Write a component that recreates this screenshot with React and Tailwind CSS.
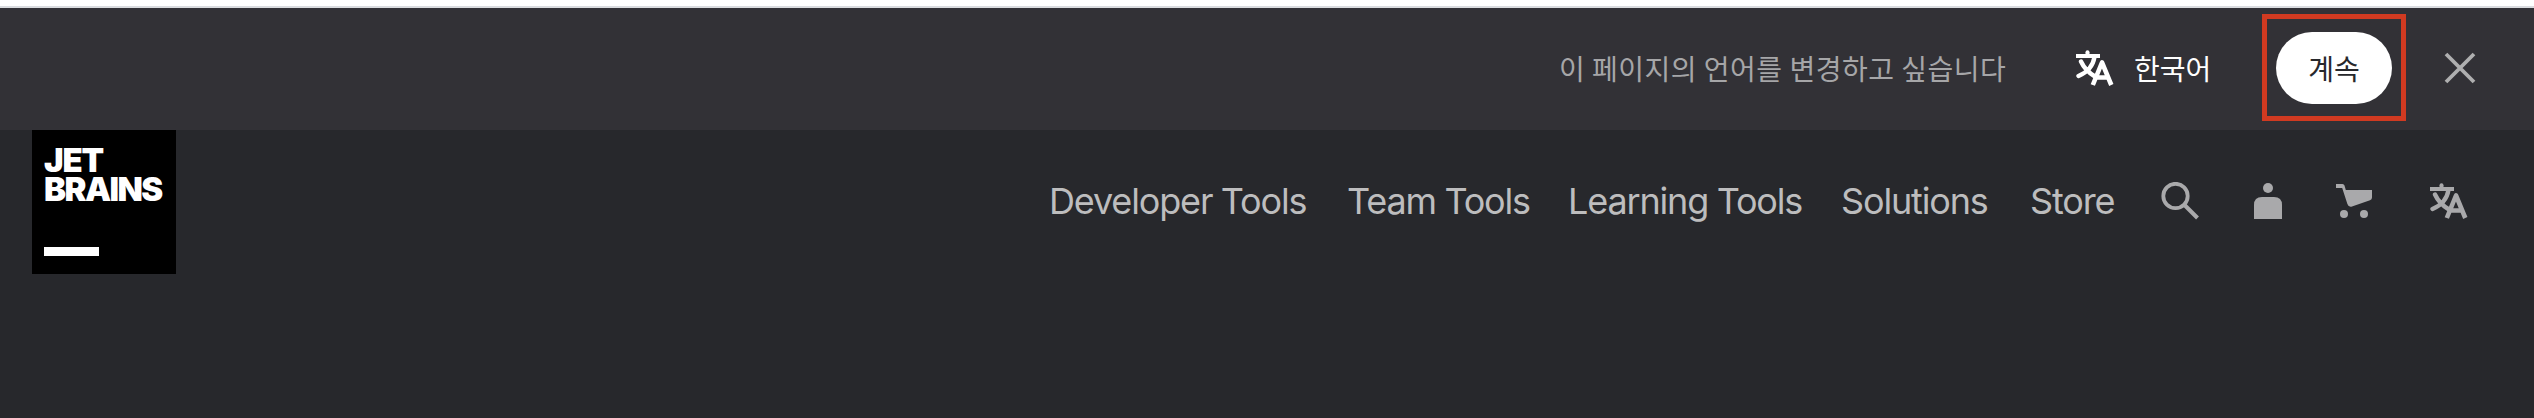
const Translate = ({ className }) => (
  <svg className={className} viewBox="0 0 38 36" fill="none" stroke="currentColor">
    <path d="M0 6H24" strokeWidth="4" />
    <path d="M11.5 4V2.3" strokeWidth="4" strokeLinecap="round" />
    <path d="M5 11.500C8 18 13 23 19 26.500M18.500 7C17 16 11 22.500 2.500 26" strokeWidth="4.400" strokeLinecap="round" />
    <path d="M16.800 35L26 12.500L35.300 35M20 27.500H32" strokeWidth="4.600" strokeLinejoin="round" />
  </svg>
);

const Search = () => (
  <svg className="h-[38px] w-[38px]" viewBox="0 0 38 38" fill="none" stroke="currentColor">
    <circle cx="14.500" cy="14" r="12.200" strokeWidth="3.800" />
    <path d="M23 22.500L36.500 36" strokeWidth="4" />
  </svg>
);

const User = () => (
  <svg className="h-9 w-7" viewBox="0 0 28 36" fill="currentColor">
    <circle cx="14" cy="5" r="5" />
    <path d="M8 14H20Q28 14 28 22V36H0V22Q0 14 8 14Z" />
  </svg>
);

const Cart = () => (
  <svg className="h-[34px] w-9" viewBox="0 0 36 34" fill="currentColor">
    <path d="M0 0H6.500Q8 0 8.500 1.500L9.800 6H36V13.500Q36 15.500 34 16.200L16 22.600Q12.500 23.500 11.400 20L6.200 4H0Z" />
    <circle cx="8" cy="30" r="4" />
    <circle cx="28" cy="30" r="4" />
  </svg>
);

export default function App() {
  return (
    <div className="flex h-[418px] w-[2534px] flex-col overflow-hidden bg-[#27282c] font-['Inter','Noto_Sans_CJK_KR',sans-serif]">
      <div className="h-2 shrink-0 border-b-2 border-[#dadce0] bg-white" />
      <section className="flex h-[122px] shrink-0 items-start justify-end bg-[#323136] pr-[58px] font-['Noto_Sans_CJK_KR',sans-serif] text-[28px] leading-[40px] font-normal">
        <p className="mt-10 w-[450px] whitespace-nowrap tracking-[0.500px] text-[#a6a6a8]">이 페이지의 언어를 변경하고 싶습니다</p>
        <Translate className="mt-[42px] ml-[67px] h-9 w-[38px] text-white" />
        <span className="mt-10 ml-5 w-[77px] whitespace-nowrap text-white">한국어</span>
        <div className="mt-[6px] ml-[51px] flex h-[107px] w-36 items-start justify-center border-5 border-[#d13a21] pt-[13px]">
          <button className="flex h-[72px] w-[116px] items-center justify-center rounded-full bg-white text-[#27282c]">계속</button>
        </div>
        <svg className="mt-[44px] ml-[38px] h-8 w-8 text-[#afafb0]" viewBox="0 0 32 32" stroke="currentColor" strokeWidth="3.800">
          <path d="M2 2L30 30M30 2L2 30" />
        </svg>
      </section>
      <header className="flex h-36 shrink-0 justify-between pr-[66px] pl-8">
        <a className="flex h-36 w-36 flex-col bg-black pt-4 pl-3 font-['Inter',sans-serif] text-[33px] leading-[29px] font-black text-white">
          <span className="tracking-[-1.200px]">JET</span>
          <span className="tracking-[-1.600px]">BRAINS</span>
          <span className="mt-[43px] h-[9px] w-[55px] bg-white" />
        </a>
        <nav className="flex h-[142px] items-center text-[36px] tracking-[-1.150px] [word-spacing:-0.500px] text-[#bdbdbe]">
          <span className="w-[298px] whitespace-nowrap">Developer Tools</span>
          <span className="w-[221px] whitespace-nowrap">Team Tools</span>
          <span className="w-[273px] whitespace-nowrap">Learning Tools</span>
          <span className="w-[189px] whitespace-nowrap">Solutions</span>
          <span className="w-[131px] whitespace-nowrap">Store</span>
          <div className="flex items-center text-[#a9a9ab]">
            <Search />
            <span className="ml-[55px]"><User /></span>
            <span className="ml-[54px]"><Cart /></span>
            <Translate className="ml-[58px] h-9 w-[38px]" />
          </div>
        </nav>
      </header>
    </div>
  );
}
